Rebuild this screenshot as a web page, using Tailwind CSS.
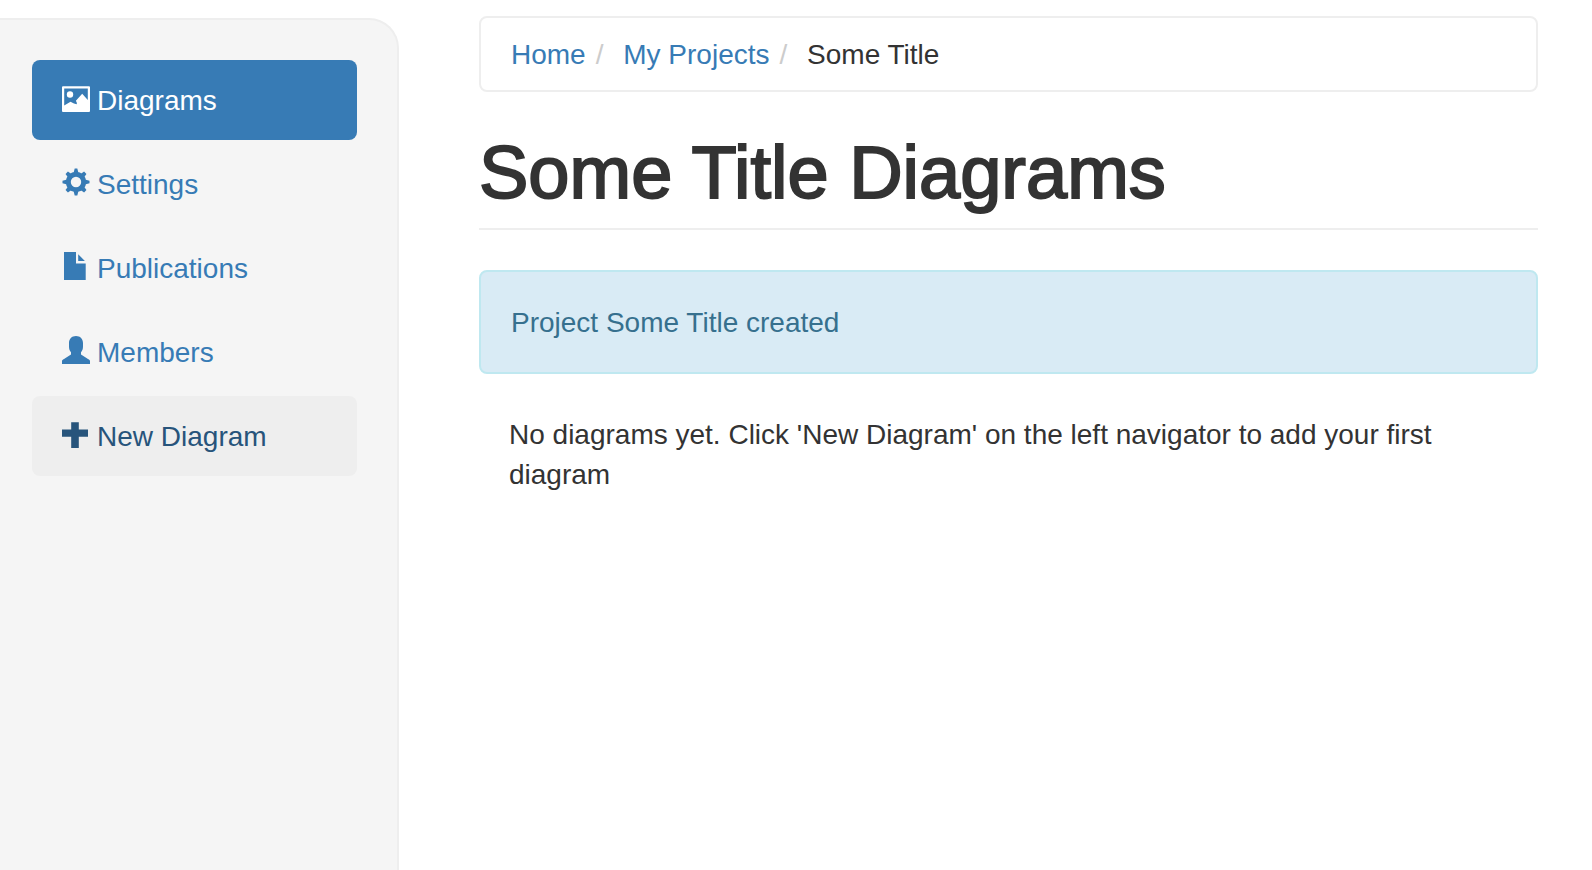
<!DOCTYPE html>
<html lang="en">
<head>
<meta charset="utf-8">
<meta name="viewport" content="width=device-width, initial-scale=1">
<title>Some Title Diagrams</title>
<script src="https://cdn.jsdelivr.net/npm/@tailwindcss/browser@4"></script>
</head>
<body class="flex min-h-screen bg-white font-['Liberation_Sans',Arial,sans-serif] text-[28px] leading-10 text-[#333]">
  <aside class="mt-[18px] w-[calc(25%+1px)] shrink-0 rounded-tr-[30px] border-t-2 border-r-2 border-[#eee] bg-[#f5f5f5] py-10 pr-10 pl-8">
    <nav aria-label="Project">
      <ul class="flex flex-col gap-1 text-[#377bb5]">
        <li>
          <a href="#" aria-current="page" class="flex items-center gap-[7px] rounded-lg bg-[#377bb5] px-[30px] pt-[21px] pb-[19px] text-white">
            <svg class="mb-1.5 size-7 shrink-0" viewBox="0 0 28 28" fill="currentColor" aria-hidden="true"><path fill-rule="evenodd" d="M1 2.300h26a1 1 0 0 1 1 1V27a1 1 0 0 1-1 1H1a1 1 0 0 1-1-1V3.300a1 1 0 0 1 1-1zM2.200 4.500v17L8.500 17.800l3.500 1.700 2.700.8.200-1.300-1-2.200L20.200 9.700l5.600 6.300V4.500z"/><circle cx="8" cy="10.500" r="3.200"/></svg>
            Diagrams
          </a>
        </li>
        <li>
          <a href="#" class="flex items-center gap-[7px] rounded-lg px-[30px] pt-[21px] pb-[19px]">
            <svg class="mb-1.5 size-7 shrink-0" viewBox="0 0 28 28" fill="currentColor" aria-hidden="true">
              <circle cx="14" cy="14" r="7.700" fill="none" stroke="currentColor" stroke-width="5"/>
              <path d="M12.700.500h2.600l1.400 5.500h-5.400z"/>
              <path d="M12.300.900h3.400l.8 5h-5z" transform="rotate(45 14 14)"/>
              <path d="M12.700.500h2.600l1.400 5.500h-5.400z" transform="rotate(90 14 14)"/>
              <path d="M12.300.900h3.400l.8 5h-5z" transform="rotate(135 14 14)"/>
              <path d="M12.700.500h2.600l1.400 5.500h-5.400z" transform="rotate(180 14 14)"/>
              <path d="M12.300.900h3.400l.8 5h-5z" transform="rotate(225 14 14)"/>
              <path d="M12.700.500h2.600l1.400 5.500h-5.400z" transform="rotate(270 14 14)"/>
              <path d="M12.300.900h3.400l.8 5h-5z" transform="rotate(315 14 14)"/>
            </svg>
            Settings
          </a>
        </li>
        <li>
          <a href="#" class="flex items-center gap-[7px] rounded-lg px-[30px] pt-[21px] pb-[19px]">
            <svg class="mb-1.5 size-7 shrink-0" viewBox="0 0 28 28" fill="currentColor" aria-hidden="true"><path d="M2 0h12v11.500h9.700V28H2zM16.200 2.200l6.700 6.800h-6.700z"/></svg>
            Publications
          </a>
        </li>
        <li>
          <a href="#" class="flex items-center gap-[7px] rounded-lg px-[30px] pt-[21px] pb-[19px]">
            <svg class="mb-1.5 size-7 shrink-0" viewBox="0 0 28 28" fill="currentColor" aria-hidden="true"><path d="M14 0c4.200 0 7 2.800 7 7v3.500c0 2.300-.6 4.200-2 5.800v2.200L26 23c1.300.7 2 1.200 2 2.200V28H0v-2.800c0-1 .7-1.500 2-2.200l7-4.500v-2.200c-1.400-1.600-2-3.500-2-5.800V7c0-4.200 2.800-7 7-7z"/></svg>
            Members
          </a>
        </li>
        <li>
          <a href="#" class="flex items-center gap-[7px] rounded-lg bg-[#eee] px-[30px] pt-[21px] pb-[19px] text-[#27547b]">
            <svg class="mb-1.5 size-7 shrink-0" viewBox="0 0 28 28" fill="currentColor" aria-hidden="true"><path d="M9.200 2.200h7.600v7.400H26v7.200h-9.200V28H9.200V16.800H0V9.600h9.200z"/></svg>
            New Diagram
          </a>
        </li>
      </ul>
    </nav>
  </aside>

  <main class="min-w-0 flex-1 pt-4 pr-[54px] pl-20">
    <nav aria-label="Breadcrumb" class="rounded-lg border-2 border-[#eee] px-[30px] pt-[17px] pb-[15px]">
      <ol class="flex flex-wrap">
        <li><a href="#" class="text-[#377bb5]">Home</a><span class="pr-3 pl-[10px] text-[#ccc]" aria-hidden="true">/&nbsp;</span></li>
        <li><a href="#" class="text-[#377bb5]">My Projects</a><span class="pr-3 pl-[10px] text-[#ccc]" aria-hidden="true">/&nbsp;</span></li>
        <li aria-current="page">Some Title</li>
      </ol>
    </nav>

    <header class="mt-[41px] border-b-2 border-[#eee] pb-[15px]">
      <h1 class="text-[74px] leading-20 [-webkit-text-stroke:2px_#333]">Some Title Diagrams</h1>
    </header>

    <div role="status" class="mt-10 rounded-lg border-2 border-[#bfe8f0] bg-[#d9ebf5] px-[30px] pt-[31px] pb-[29px] text-[#36708e]">Project Some Title created</div>

    <p class="px-[30px] pt-[41px]">No diagrams yet. Click 'New Diagram' on the left navigator to add your first diagram</p>
  </main>
</body>
</html>
